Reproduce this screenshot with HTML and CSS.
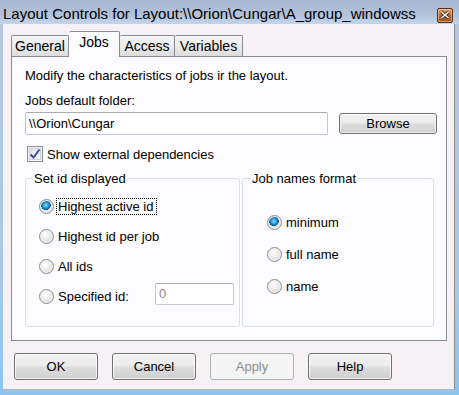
FILE: index.html
```html
<!DOCTYPE html>
<html lang="en">
<head>
  <meta charset="UTF-8" />
  <title>Layout Controls</title>
  <link rel="stylesheet" href="styles.css">
</head>
<body>
  <div class="window">

    <!-- title bar -->
    <div class="titlebar">
      <span class="title">Layout Controls for Layout:\\Orion\Cungar\A_group_windowss</span>
      <span class="close-btn">
        <svg width="10" height="8" viewBox="0 0 10 8">
          <path d="M1.5 1 L8.5 7 M8.5 1 L1.5 7" stroke="#3a2010" stroke-width="3" />
          <path d="M1.5 1 L8.5 7 M8.5 1 L1.5 7" stroke="#ffffff" stroke-width="1.6" />
        </svg>
      </span>
    </div>

    <div class="client">
      <!-- tabs -->
      <div class="tabs">
        <div class="tab tab-first">General</div>
        <div class="tab active">Jobs</div>
        <div class="tab">Access</div>
        <div class="tab">Variables</div>
      </div>

      <div class="panel">
        <p class="desc">Modify the characteristics of jobs ir the layout.</p>
        <p class="field-label">Jobs default folder:</p>
        <div class="folder-row">
          <div class="textbox folder-box">\\Orion\Cungar</div>
          <button class="btn browse-btn">Browse</button>
        </div>

        <div class="check-row">
          <span class="checkbox">
            <svg width="12" height="12" viewBox="0 0 12 12">
              <path d="M1.5 6.5 L4.5 9.5 L10.5 1.5" fill="none" stroke="#3c4f9a" stroke-width="2" />
            </svg>
          </span>
          <span>Show external dependencies</span>
        </div>

        <div class="groups">
          <fieldset class="group group-left">
            <legend>Set id displayed</legend>
            <div class="radio-row">
              <span class="radio checked"></span>
              <span class="focus-label">Highest active id</span>
            </div>
            <div class="radio-row">
              <span class="radio"></span>
              <span>Highest id per job</span>
            </div>
            <div class="radio-row">
              <span class="radio"></span>
              <span>All ids</span>
            </div>
            <div class="radio-row">
              <span class="radio"></span>
              <span class="spec-label">Specified id:</span>
              <div class="textbox spec-box">0</div>
            </div>
          </fieldset>

          <fieldset class="group group-right">
            <legend>Job names format</legend>
            <div class="radio-row tall">
              <span class="radio checked"></span>
              <span>minimum</span>
            </div>
            <div class="radio-row tall">
              <span class="radio"></span>
              <span>full name</span>
            </div>
            <div class="radio-row tall">
              <span class="radio"></span>
              <span>name</span>
            </div>
          </fieldset>
        </div>
      </div>

      <!-- dialog buttons -->
      <div class="dialog-buttons">
        <button class="btn">OK</button>
        <button class="btn">Cancel</button>
        <button class="btn disabled">Apply</button>
        <button class="btn">Help</button>
      </div>
    </div>
  </div>
</body>
</html>
```

FILE: styles.css
```css
* { margin: 0; padding: 0; box-sizing: border-box; }
body {
  width: 459px;
  height: 395px;
  overflow: hidden;
  font-family: "Liberation Sans", Arial, sans-serif;
  font-size: 13px;
  color: #000;
}
.window {
  height: 395px;
  display: flex;
  flex-direction: column;
  background: linear-gradient(#b7c6dc, #a9c8e6 70%, #8cc6ee);
  padding: 0 4px 5px 3px;
}
.titlebar {
  height: 24px;
  margin: 0 -4px 0 -3px;
  padding: 0 6px 0 3px;
  display: flex;
  align-items: center;
  justify-content: space-between;
  background: linear-gradient(#a8b6d0, #b3c3dc 65%, #c2d6ee);
}
.title {
  font-size: 15px;
  color: #000;
  padding-top: 2px;
}
.close-btn {
  width: 16px;
  height: 15px;
  margin-top: 6px;
  border: 1px solid #5a3116;
  border-radius: 2px;
  background: linear-gradient(#d7a273, #b16c38 50%, #9b5426);
  box-shadow: inset 0 0 0 1px rgba(255, 220, 180, 0.5);
  display: flex;
  align-items: center;
  justify-content: center;
}
.client {
  flex: 1;
  background: #f5f1f5;
  border-right: 1px solid #8a8a8a;
  border-bottom: 1px solid #b8b8c0;
  padding: 8px 9px 0 8px;
}

/* tabs */
.tabs {
  display: flex;
  align-items: flex-end;
  height: 25px;
  margin-bottom: -1px;
  position: relative;
  z-index: 1;
}
.tab {
  height: 21px;
  margin-bottom: 1px;
  padding-top: 2px;
  border: 1px solid #898c95;
  border-bottom: none;
  border-left: none;
  border-radius: 2px 2px 0 0;
  background: linear-gradient(#f6f6f6, #ebebeb 50%, #dcdcdc);
  font-size: 14px;
  line-height: 16px;
  text-align: center;
  white-space: nowrap;
}
.tab-first { border-left: 1px solid #898c95; width: 58px; }
.tab.active {
  height: 26px;
  margin-bottom: 0;
  width: 51px;
  padding-top: 2px;
  background: #fcfcfe;
}
.tab:nth-child(3) { width: 55px; }
.tab:nth-child(4) { width: 68px; }

.panel {
  width: 436px;
  height: 285px;
  background: #fcfcfe;
  border: 1px solid #898c95;
  padding: 0 8px 0 13px;
}
.desc {
  margin-top: 11px;
  line-height: 15px;
}
.field-label {
  margin-top: 10px;
  line-height: 15px;
}
.folder-row {
  margin-top: 4px;
  display: flex;
  align-items: center;
}
.textbox {
  background: #fff;
  border: 1px solid #c3c7cf;
  border-top-color: #abadb3;
  border-radius: 2px;
  padding: 2px 3px;
  line-height: 17px;
}
.folder-box {
  width: 303px;
  height: 23px;
}
.browse-btn {
  margin-left: 11px;
  width: 98px;
  height: 21px;
}
.btn {
  font-family: "Liberation Sans", Arial, sans-serif;
  font-size: 13px;
  color: #000;
  border: 1px solid #707070;
  border-radius: 3px;
  background: linear-gradient(#f3f3f3, #ebebeb 48%, #dddddd 52%, #cfcfcf);
  box-shadow: inset 0 0 0 1px rgba(255, 255, 255, 0.7);
}
.btn.disabled {
  color: #8d8d8d;
  border-color: #adb2b5;
  background: #f4f4f4;
  box-shadow: none;
}

.check-row {
  margin-top: 11px;
  height: 16px;
  display: flex;
  align-items: center;
  gap: 4px;
  padding-left: 2px;
}
.checkbox {
  width: 16px;
  height: 16px;
  border: 1px solid #8e8f8f;
  background: linear-gradient(135deg, #dcdcdc, #fdfdfd);
  box-shadow: inset 0 0 0 1px #f4f4f4, inset 0 0 0 2px #cfd3d8;
  display: flex;
  align-items: center;
  justify-content: center;
}

.groups {
  margin-top: 9px;
  display: flex;
  gap: 2px;
}
.group {
  border: 1px solid #d5dfe5;
  border-radius: 3px;
  height: 156px;
}
.group legend {
  padding: 0 1px;
  line-height: 15px;
}
.group-left {
  width: 215px;
  padding: 5px 0 0 13px;
}
.group-left legend { margin-left: -6px; }
.group-right {
  width: 192px;
  padding: 20px 0 0 24px;
}
.group-right legend { margin-left: -16px; }
.radio-row {
  height: 30px;
  display: flex;
  align-items: center;
  gap: 4px;
}
.radio-row.tall { height: 32px; }
.radio {
  flex: none;
  width: 15px;
  height: 15px;
  border-radius: 50%;
  border: 1px solid #8b8b8b;
  background: radial-gradient(circle at 40% 35%, #ffffff, #e6e6e6 55%, #cdcdcd);
  box-shadow: inset 0 0 0 1px #f4f4f4;
}
.radio.checked {
  background:
    radial-gradient(circle at 45% 40%, #8fdcff 0, #1a8fd0 30%, #0b4f86 45%, transparent 47%),
    radial-gradient(circle at 40% 35%, #ffffff, #e6e6e6 55%, #cdcdcd);
}
.focus-label {
  border: 1px dotted #000;
  padding: 0 0 0 1px;
  margin-left: -2px;
  line-height: 15px;
  width: 101px;
}
.spec-label { width: 93px; }
.spec-box {
  width: 79px;
  height: 22px;
  color: #8a8a8a;
  margin-top: -4px;
  line-height: 15px;
}

.dialog-buttons {
  margin-top: 12px;
  margin-left: 3px;
  display: flex;
  gap: 14px;
}
.dialog-buttons .btn {
  width: 84px;
  height: 27px;
}
```
